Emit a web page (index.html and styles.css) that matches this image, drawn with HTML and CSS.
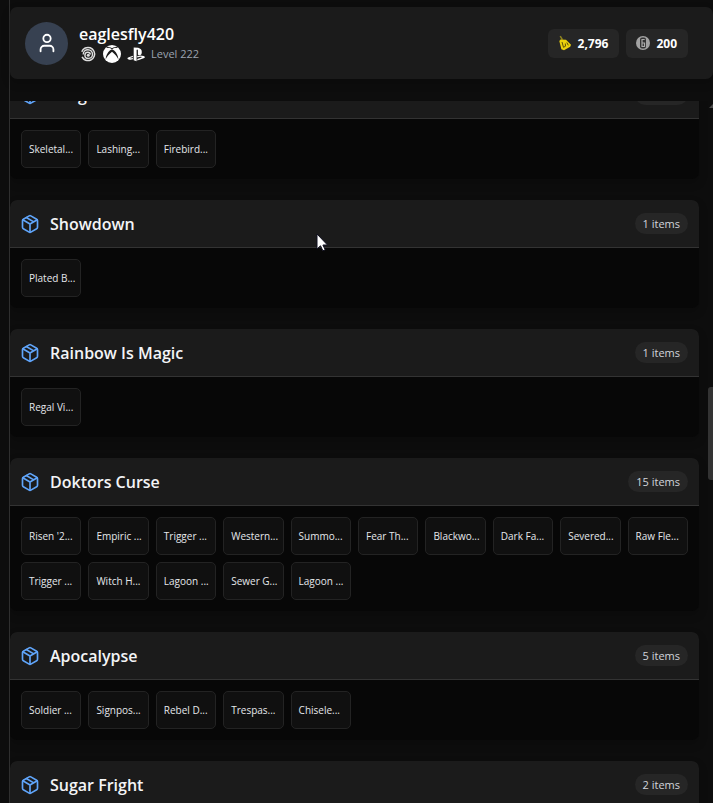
FILE: index.html
```html
<!DOCTYPE html>
<html lang="en">
<head>
    <meta charset="UTF-8">
    <title>Inventory</title>
    <link rel="stylesheet" href="styles.css">
</head>
<body>
    <svg class="symbols" aria-hidden="true">
        <symbol id="box" viewBox="0 0 24 24">
            <path d="M11 21.73a2 2 0 0 0 2 0l7-4A2 2 0 0 0 21 16V8a2 2 0 0 0-1-1.73l-7-4a2 2 0 0 0-2 0l-7 4A2 2 0 0 0 3 8v8a2 2 0 0 0 1 1.73z"/>
            <path d="M12 22V12M3.3 7l8.7 5 8.7-5M7.5 4.27l9 5.15"/>
        </symbol>
    </svg>

    <main class="panel">
        <header class="profile">
            <div class="avatar">
                <svg class="line-icon" viewBox="0 0 24 24"><circle cx="12" cy="7" r="4"/><path d="M19 21v-2a4 4 0 0 0-4-4H9a4 4 0 0 0-4 4v2"/></svg>
            </div>
            <div class="user">
                <h1>eaglesfly420</h1>
                <div class="platforms">
                    <svg class="platform" viewBox="0 0 18 18" role="img" aria-label="Ubisoft">
                        <circle cx="9" cy="9" r="6.600" fill="none" stroke="#dedede" stroke-width="1.500" stroke-dasharray="36 5.500" transform="rotate(200 9 9)"/>
                        <path d="M4.200 9.400c0-3 2.200-4.700 4.700-4.700 2.700 0 4.600 2 4.600 4.500 0 2.400-1.800 4.200-4.200 4.200-2 0-3.400-1.400-3.400-3.200 0-1.700 1.300-2.900 2.900-2.900 1.500 0 2.500 1 2.500 2.300" fill="none" stroke="#dedede" stroke-width="1.400"/>
                        <circle cx="9.300" cy="10.200" r="1.500" fill="#dedede"/>
                    </svg>
                    <svg class="platform" viewBox="0 0 18 18" role="img" aria-label="Xbox">
                        <circle cx="9" cy="9" r="9" fill="#fff"/>
                        <path d="M3.600 2.500C5.500 2 7.500 2.700 9 3.700c1.500-1 3.500-1.700 5.400-1.200" fill="none" stroke="#1b1b1b" stroke-width="1"/>
                        <path d="M6.800 5.500C4.400 7.800 2.800 10.800 2.600 14.500 4 11.500 6.300 8.800 9 6.700c2.700 2.100 5 4.800 6.400 7.800-.2-3.700-1.800-6.700-4.200-9L9 4.200z" fill="#1b1b1b"/>
                    </svg>
                    <svg class="platform" viewBox="0 0 18 18" role="img" aria-label="PlayStation">
                        <path d="M6.700 2.400v12.900l2.900.9V5.300c0-.6.3-.9.700-.8.500.2.600.6.600 1.100v4.200c2.400 1.100 3.900-.2 3.900-2.900 0-2.600-1.200-3.400-3.600-4.200z" fill="#fff"/>
                        <path d="M5.900 10.800l-4.100 1.500c-1.900.7-1.700 1.700-.2 2.200 1.400.4 2.900.3 4.300-.2v-1.400c-1.500.5-2.600.6-2.900.2-.1-.2.3-.4 2.900-1.200zM10.300 10.900c2-.6 4.300-.7 6.300.1 1.700.7 1.700 1.700.1 2.300l-6.400 2.300v-1.700c4-1.500 4.700-1.600 4.300-1.900-.7-.5-2.400-.1-4.300.5z" fill="#fff"/>
                    </svg>
                    <span class="level">Level 222</span>
                </div>
            </div>
            <div class="wallet">
                <div class="coin">
                    <svg viewBox="0 0 16 16"><path d="M3.200 1.200l2.200 3.500" stroke="#8f8420" stroke-width="1.500"/><path d="M3.500 4.500l5.500.3 5 5-.8 1.900-6.200 3.500-2.600-.9L2.300 6z" fill="#ecd20c"/><path d="M5 7l1.500 5.300 2-1.100L8.300 8.500M9.800 7.500l1.500 2.800" stroke="#5d5008" stroke-width="1" fill="none"/></svg>
                    <span>2,796</span>
                </div>
                <div class="coin">
                    <svg viewBox="0 0 16 16"><circle cx="8" cy="8" r="7" fill="#a2a2a2"/><rect x="5" y="2.500" width="6" height="11" rx="2" fill="#333"/><path d="M9.700 4.500H7v7h2.500V8H7" fill="none" stroke="#aaa" stroke-width="1.200"/></svg>
                    <span>200</span>
                </div>
            </div>
        </header>

        <div class="viewport">
            <div class="scroller" id="scroller">
                <section class="event">
                    <div class="event-head"><svg class="line-icon"><use href="#box"/></svg><h2>Dragon</h2><span class="count">3 items</span></div>
                    <ul class="items"><li>Skeletal...</li><li>Lashing...</li><li>Firebird...</li></ul>
                </section>
                <section class="event">
                    <div class="event-head"><svg class="line-icon"><use href="#box"/></svg><h2>Showdown</h2><span class="count">1 items</span></div>
                    <ul class="items"><li>Plated B...</li></ul>
                </section>
                <section class="event">
                    <div class="event-head"><svg class="line-icon"><use href="#box"/></svg><h2>Rainbow Is Magic</h2><span class="count">1 items</span></div>
                    <ul class="items"><li>Regal Vi...</li></ul>
                </section>
                <section class="event">
                    <div class="event-head"><svg class="line-icon"><use href="#box"/></svg><h2>Doktors Curse</h2><span class="count">15 items</span></div>
                    <ul class="items">
                        <li>Risen '2...</li>
                        <li>Empiric ...</li>
                        <li>Trigger ...</li>
                        <li>Western...</li>
                        <li>Summo...</li>
                        <li>Fear Th...</li>
                        <li>Blackwo...</li>
                        <li>Dark Fa...</li>
                        <li>Severed...</li>
                        <li>Raw Fle...</li>
                        <li>Trigger ...</li>
                        <li>Witch H...</li>
                        <li>Lagoon ...</li>
                        <li>Sewer G...</li>
                        <li>Lagoon ...</li>
                    </ul>
                </section>
                <section class="event">
                    <div class="event-head"><svg class="line-icon"><use href="#box"/></svg><h2>Apocalypse</h2><span class="count">5 items</span></div>
                    <ul class="items"><li>Soldier ...</li><li>Signpos...</li><li>Rebel D...</li><li>Trespas...</li><li>Chisele...</li></ul>
                </section>
                <section class="event">
                    <div class="event-head"><svg class="line-icon"><use href="#box"/></svg><h2>Sugar Fright</h2><span class="count">2 items</span></div>
                    <ul class="items"></ul>
                </section>
            </div>
            <div class="scroll-arrow"></div>
            <div class="scroll-thumb"></div>
        </div>
    </main>

    <svg class="cursor" viewBox="0 0 12 19"><path d="M1 1v15l3.500-3.200 2.400 5 2.300-1.100-2.300-4.700H11.500z" fill="#fff" stroke="#101020" stroke-width="1"/></svg>

    <script>
        document.getElementById('scroller').scrollTop = 30;
    </script>
</body>
</html>
```

FILE: styles.css
```css
* {
    box-sizing: border-box;
}

body {
    margin: 0;
    height: 100vh;
    padding-left: 9px;
    overflow: hidden;
    background-color: #0d0d0d;
    color: #f3f4f6;
    font-family: "Open Sans", "Noto Sans", sans-serif;
}

h1, h2, ul {
    margin: 0;
    padding: 0;
}

.symbols {
    display: none;
}

.panel {
    display: flex;
    flex-direction: column;
    height: 100%;
    padding-top: 7px;
    border-left: 1px solid #2f2f2f;
}

.line-icon {
    fill: none;
    stroke: currentColor;
    stroke-width: 2;
    stroke-linecap: round;
    stroke-linejoin: round;
}

/* profile bar */
.profile {
    display: flex;
    align-items: center;
    gap: 11px;
    height: 72px;
    flex-shrink: 0;
    padding: 0 25px 0 15px;
    margin-bottom: 22px;
    border-radius: 7px;
    background-color: #1b1b1b;
    box-shadow: 0 4px 10px rgba(0, 0, 0, 0.2);
}

.avatar {
    display: flex;
    align-items: center;
    justify-content: center;
    width: 43px;
    height: 43px;
    border-radius: 50%;
    background-color: #374151;
}

.avatar svg {
    width: 22px;
    height: 22px;
    color: #fff;
}

.user h1 {
    font-size: 16px;
    line-height: 22px;
    font-weight: 600;
    color: #fff;
}

.platforms {
    display: flex;
    align-items: center;
    gap: 6px;
}

.platform {
    width: 18px;
    height: 18px;
}

.level {
    font-size: 11px;
    line-height: 18px;
    color: #9ca3af;
}

.wallet {
    display: flex;
    gap: 7px;
    margin-left: auto;
}

.coin {
    display: flex;
    align-items: center;
    gap: 5px;
    height: 29px;
    padding: 0 11px 0 9px;
    border-radius: 6px;
    background-color: #262626;
    color: #fff;
    font-size: 12px;
    font-weight: 700;
}

.coin svg {
    width: 16px;
    height: 16px;
}

/* event list */
.viewport {
    position: relative;
    flex: 1;
    min-height: 0;
}

.scroller {
    display: flex;
    flex-direction: column;
    gap: 21px;
    height: 100%;
    padding-right: 14px;
    overflow-y: auto;
    scrollbar-width: none;
}

.event {
    flex-shrink: 0;
    border-radius: 7px;
    background-color: #070707;
    box-shadow: 0 4px 10px rgba(0, 0, 0, 0.2);
}

.event-head {
    display: flex;
    align-items: center;
    gap: 10px;
    height: 48px;
    padding: 0 11px 0 10px;
    border-bottom: 1px solid #333;
    border-radius: 7px 7px 0 0;
    background-color: #1b1b1b;
}

.event-head svg {
    width: 20px;
    height: 20px;
    color: #60a5fa;
}

.event-head h2 {
    font-size: 16px;
    line-height: 24px;
    font-weight: 600;
}

.count {
    margin-left: auto;
    padding: 0 8px;
    border-radius: 11px;
    background-color: #262626;
    color: #d1d5db;
    font-size: 11px;
    line-height: 21px;
}

.items {
    display: grid;
    grid-template-columns: repeat(10, minmax(0, 1fr));
    gap: 7px;
    min-height: 60px;
    padding: 11px;
    list-style: none;
}

.items li {
    height: 38px;
    padding: 0 7px;
    border: 1px solid #232323;
    border-radius: 5px;
    background-color: #101010;
    color: #e5e7eb;
    font-size: 10px;
    line-height: 36px;
    white-space: nowrap;
}

.scroll-arrow {
    position: absolute;
    top: 3px;
    right: 0;
    border: 4px solid transparent;
    border-top-width: 0;
    border-bottom-color: #4a4a4a;
    border-right-width: 0;
}

.scroll-thumb {
    position: absolute;
    top: 286px;
    right: 0;
    width: 5px;
    height: 93px;
    border-radius: 3px 0 0 3px;
    background-color: #333;
}

.cursor {
    position: absolute;
    left: 316px;
    top: 233px;
    width: 12px;
    height: 19px;
}
```
